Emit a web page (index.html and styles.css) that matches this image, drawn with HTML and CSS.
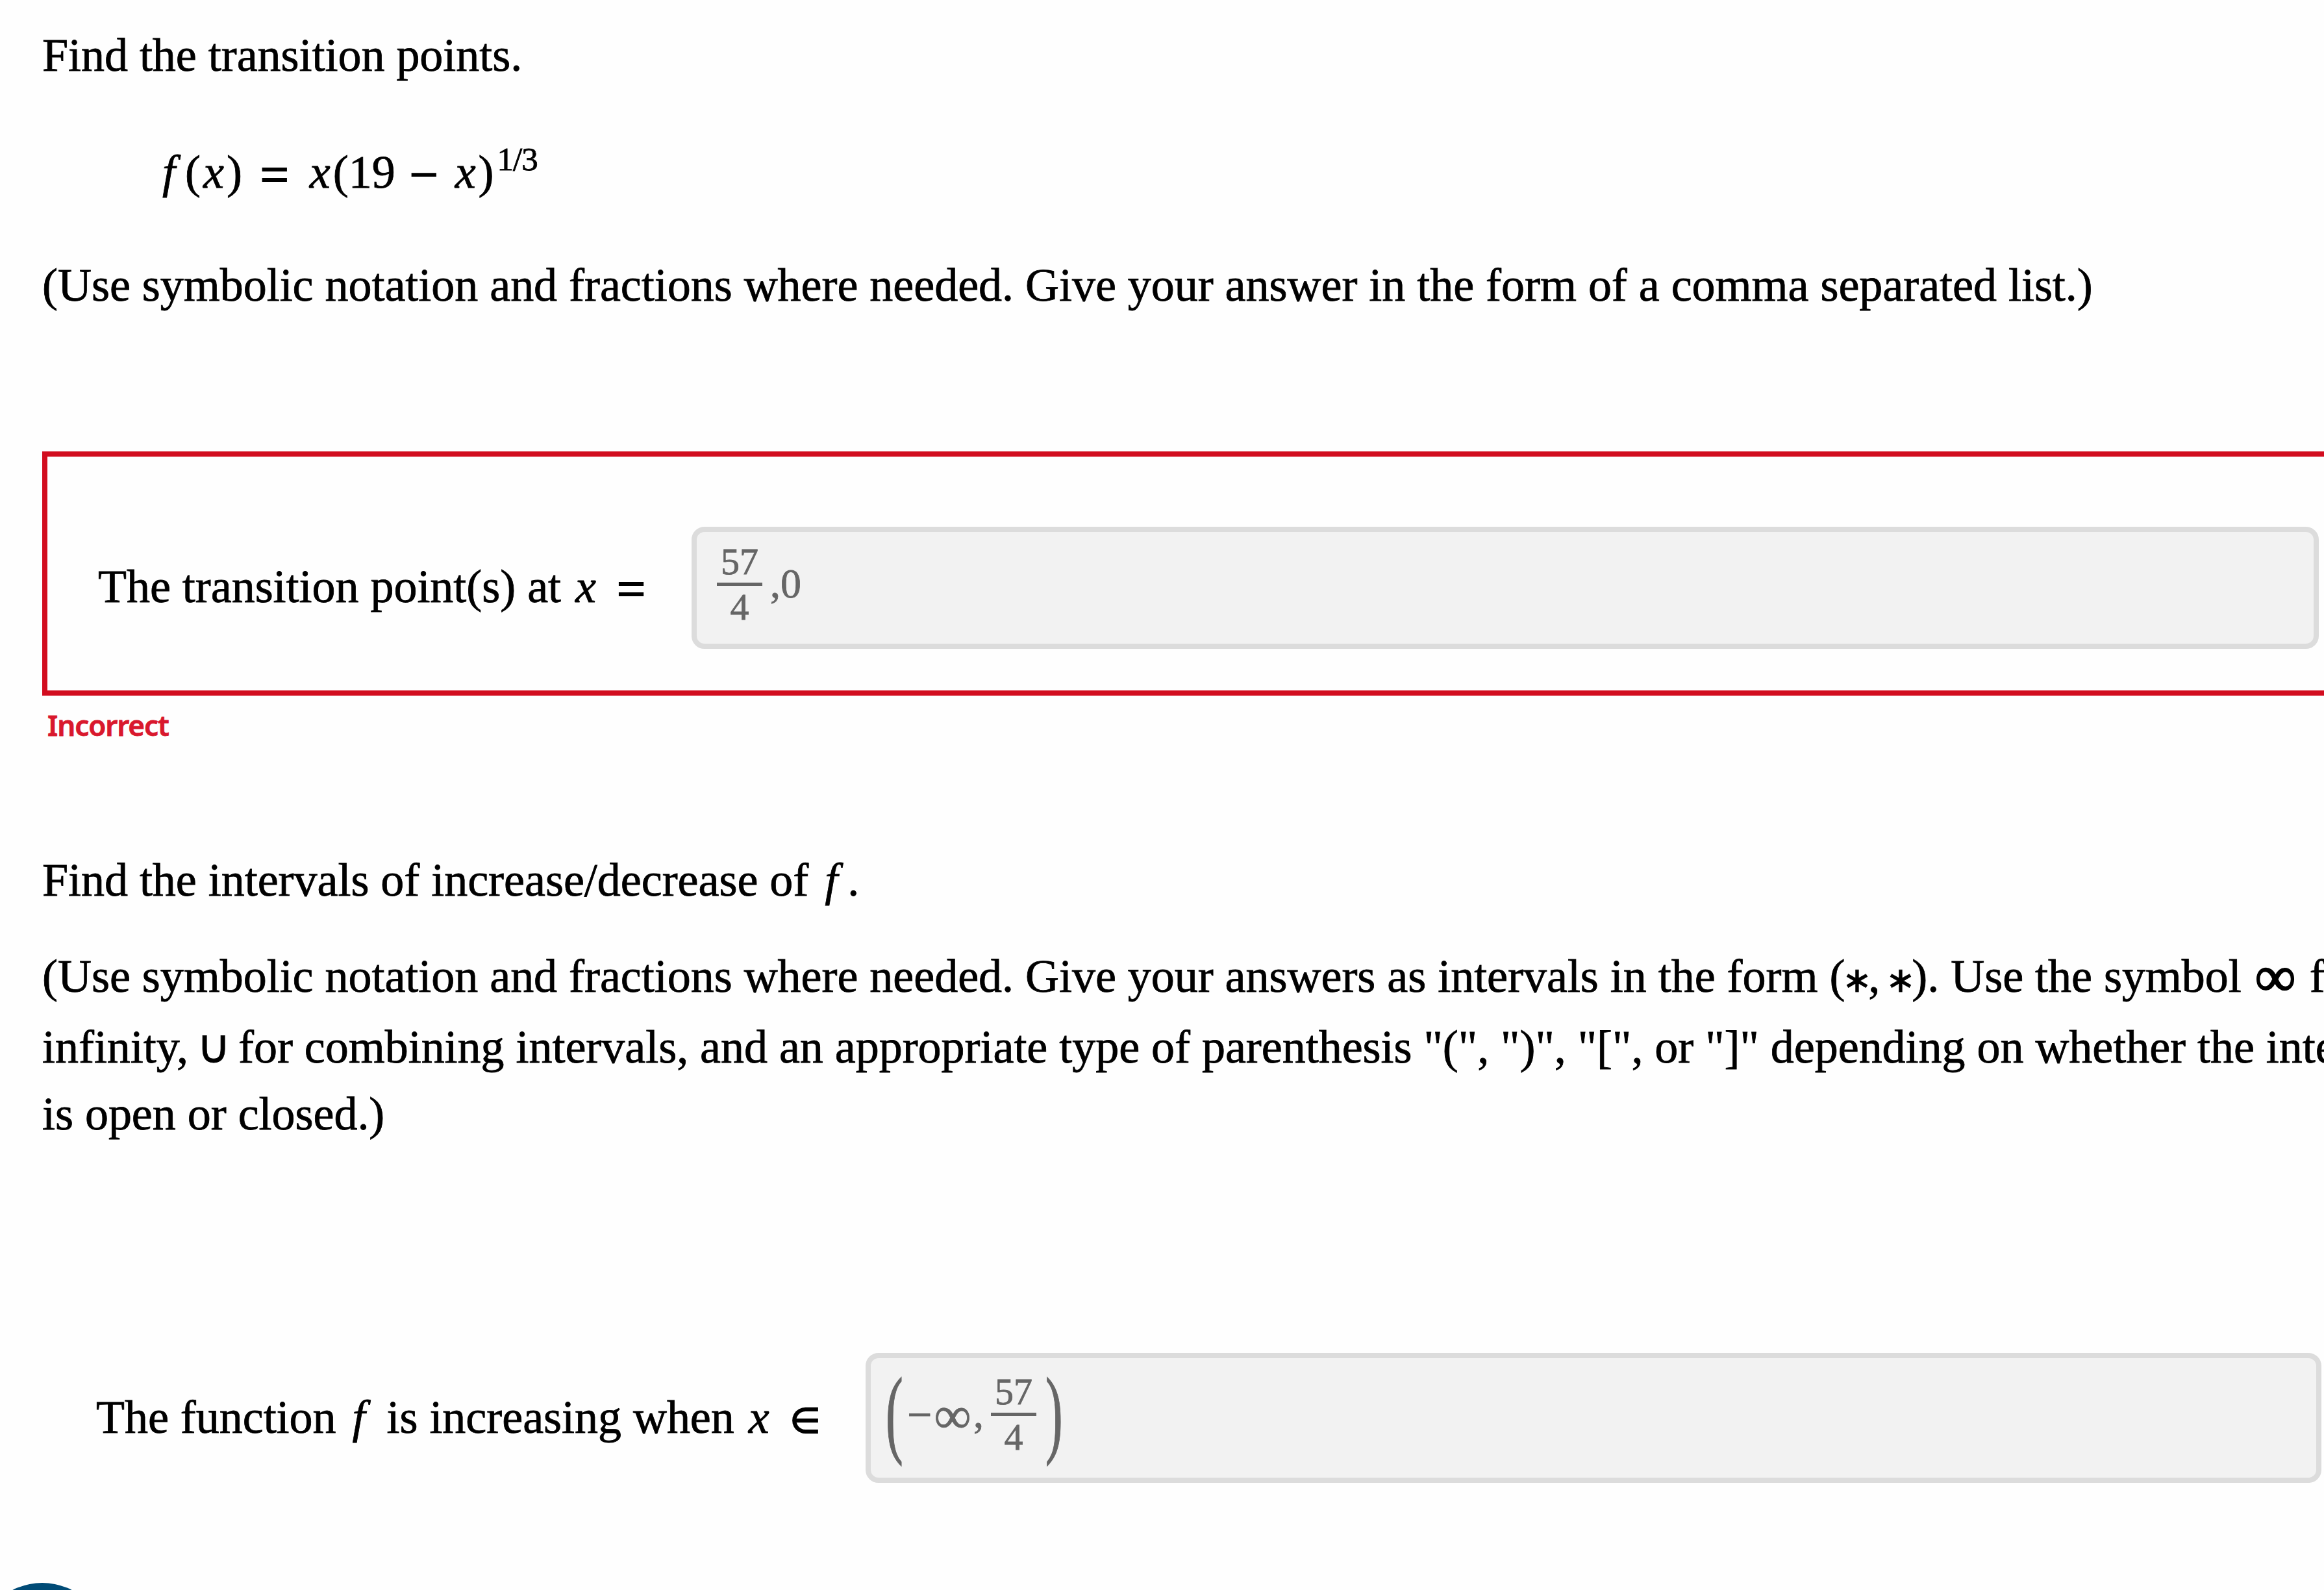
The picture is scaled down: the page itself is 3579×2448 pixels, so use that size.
FILE: index.html
```html
<!DOCTYPE html>
<html lang="en">
<head>
  <meta charset="UTF-8">
  <meta name="viewport" content="width=device-width, initial-scale=1.0">
  <title>Transition Points</title>
  <link rel="stylesheet" href="styles.css">
</head>
<body>
  <main class="question">
    <p class="line intro">Find the transition points.</p>
    <p class="line formula"><i class="f">f</i>(<i class="x">x</i>)<span class="op eq">=</span><i class="x">x</i>(19<span class="op minus">−</span><i class="x">x</i>)<sup>1/3</sup></p>
    <p class="line hint">(Use symbolic notation and fractions where needed. Give your answer in the form of a comma separated list.)</p>

    <div class="answer incorrect">
      <label class="line">The transition point(s) at <i class="x">x</i><span class="op eq">=</span></label>
      <div class="field">
        <span class="frac"><span>57</span><span class="den">4</span></span><span class="rest">,0</span>
      </div>
    </div>
    <div class="status">Incorrect</div>

    <p class="line intervals">Find the intervals of increase/decrease of <i class="f">f</i>.</p>
    <div class="notes">
      <p class="line">(Use symbolic notation and fractions where needed. Give your answers as intervals in the form (<span class="star">∗</span>,<span class="star second">∗</span>). Use the symbol <span class="inf">∞</span> for</p>
      <p class="line union-line">infinity, <span class="cup">∪</span> for combining intervals, and an appropriate type of parenthesis "(", ")", "[", or "]" depending on whether the interval</p>
      <p class="line last">is open or closed.)</p>
    </div>

    <div class="answer increasing">
      <label class="line">The function <i class="f">f</i> is increasing when <i class="x">x</i><span class="in">∈</span></label>
      <div class="field">
        <span class="paren">(</span><span class="neg">−</span><span class="infinity">∞</span><span class="comma">,</span><span class="frac"><span>57</span><span class="den">4</span></span><span class="paren close">)</span>
      </div>
    </div>
  </main>
  <!-- Help button in the bottom corner -->
  <div class="corner">
    <div class="help"></div>
  </div>
</body>
</html>
```
FILE: styles.css
```css
* {
  box-sizing: border-box;
}

body {
  margin: 0;
  height: 2448px;
  overflow: hidden;
  position: relative;
  background: #fefefe;
  color: #000;
  font-family: "Liberation Serif", "Times New Roman", "DejaVu Sans", serif;
  font-size: 72px;
  -webkit-text-stroke: 0.8px;
}

.question {
  display: flex;
  flex-direction: column;
  height: 2448px;
  overflow: hidden;
  padding: 35px 0 0 65px;
}

/* Text lines */
.line {
  flex-shrink: 0;
  margin: 0;
  height: 100px;
  line-height: 100px;
  letter-spacing: -0.03px;
  white-space: nowrap;
}

.f {
  margin: 0 15px 0 7px;
}

.x {
  margin: 0 4px 0 4px;
}

.op {
  display: inline-block;
  font-size: 78px;
  line-height: 0;
  vertical-align: -6px;
  text-align: center;
  -webkit-text-stroke: 2px;
}

.eq {
  width: 100px;
}

.minus {
  width: 88px;
}

.formula {
  margin-top: 80px;
  padding-left: 178px;
}

sup {
  font-size: 51px;
  line-height: 0;
  vertical-align: 27px;
  margin-left: 5px;
  letter-spacing: -1px;
}

.hint {
  margin-top: 74px;
}

/* Answer rows */
.answer {
  display: flex;
  flex-shrink: 0;
}

.field {
  display: flex;
  background: #f2f2f2;
  border: 8px solid #dcdcdc;
  border-radius: 20px;
  color: #666;
  font-size: 64px;
}

.incorrect {
  margin-top: 206px;
  width: 3600px;
  height: 376px;
  border: 8px solid #d20d1f;
  padding: 108px 0 0 78px;
}

.incorrect .line {
  width: 914px;
  margin-top: 42px;
}

.incorrect .field {
  width: 2506px;
  height: 188px;
  padding: 13px 0 0 31px;
}

.frac {
  display: flex;
  flex-direction: column;
  width: 70px;
  height: 136px;
  font-size: 58px;
  line-height: 65px;
  text-align: center;
}

.den {
  border-top: 5px solid #666;
}

.rest {
  margin-left: 12px;
  line-height: 64px;
  padding-top: 35px;
}

.status {
  margin-top: 15px;
  padding-left: 8px;
  height: 61px;
  line-height: 60px;
  color: #d9182d;
  font-family: "Noto Sans", sans-serif;
  font-size: 44px;
  font-weight: 600;
  letter-spacing: -1.1px;
}

.intervals {
  margin-top: 158px;
}

/* Notes on the expected notation */
.notes {
  margin-top: 48px;
}

.union-line {
  margin-top: 9px;
}

.last {
  margin-top: 3px;
}

.star {
  display: inline-block;
  width: 44px;
  margin: 0 -4px;
  font-size: 54px;
  line-height: 0;
  text-align: center;
}

.second {
  margin-left: 9px;
}

.inf {
  display: inline-block;
  width: 69px;
  font-size: 88px;
  line-height: 0;
  vertical-align: -6px;
  text-align: center;
  -webkit-text-stroke: 2px;
}

.cup {
  display: inline-block;
  width: 46px;
  margin-left: -5px;
  text-align: center;
}

.increasing {
  margin-top: 318px;
  padding-left: 83px;
}

.increasing .line {
  width: 1185px;
  margin-top: 49px;
}

.in {
  display: inline-block;
  width: 102px;
  font-size: 54px;
  line-height: 0;
  text-align: center;
  -webkit-text-stroke: 2px;
}

.increasing .field {
  width: 2242px;
  height: 200px;
  padding: 19px 0 0 23px;
  line-height: 134px;
}

.paren {
  width: 27px;
  height: 128px;
  font-size: 80px;
  line-height: 128px;
  transform: scaleY(1.88);
}

.neg {
  margin-left: 6px;
  width: 38px;
  font-size: 68px;
  line-height: 136px;
}

.infinity {
  width: 64px;
  font-size: 80px;
  line-height: 139px;
  text-align: center;
}

.comma {
  width: 27px;
}

.close {
  margin-left: 14px;
}

.corner {
  position: absolute;
  left: 0;
  bottom: 0;
  width: 165px;
  height: 11px;
  overflow: hidden;
}

.help {
  width: 200px;
  height: 200px;
  margin-left: -35px;
  border-radius: 50%;
  background: #004b76;
}
```
